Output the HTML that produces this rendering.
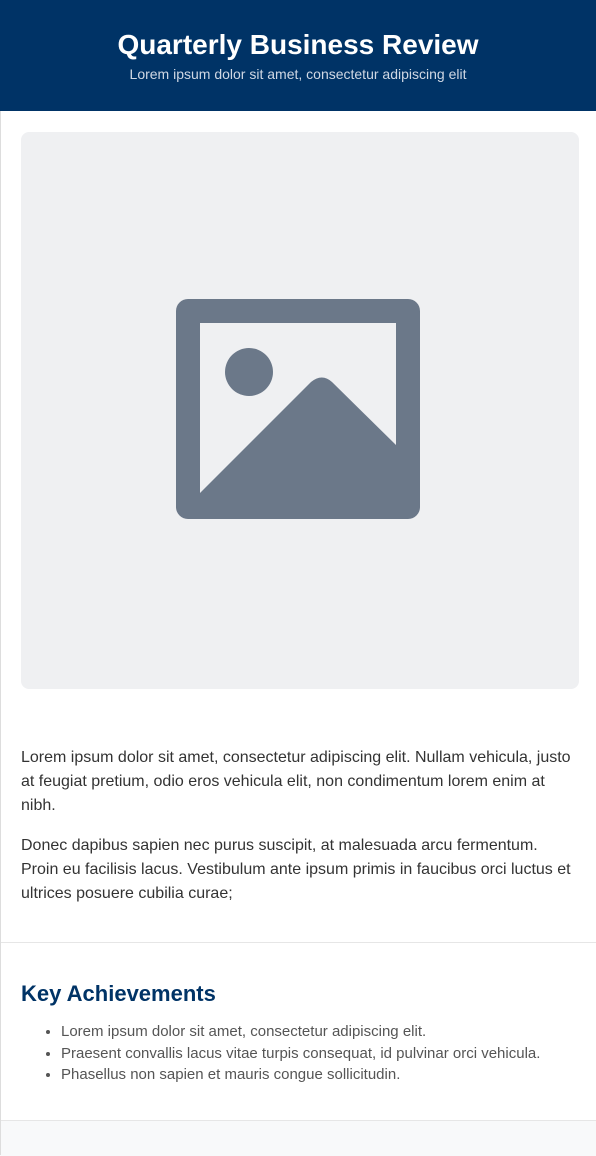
<!DOCTYPE html>
<html><head><style>
body{margin:0;width:596px;height:1155px;overflow:hidden;font-family:"Liberation Sans",Arial,sans-serif;background:#fff;}
.hdr{height:111px;background:#003366;text-align:center;color:#fff;}
.hdr h1{margin:0;padding-top:28px;font-size:28px;line-height:34px;font-weight:bold;}
.hdr p{margin:4px 0 0;font-size:14px;color:#d0d8e4;}
.img{position:absolute;left:21px;top:132px;width:558px;height:557px;background:#eff0f2;border-radius:8px;}
.txt{position:absolute;left:21px;top:746px;width:556px;font-size:16px;line-height:24px;color:#333;}
.txt p{margin:0 0 16px;}
.hr1{position:absolute;left:0;top:942px;width:596px;height:1px;background:#e6e6e6;}
h2{position:absolute;left:21px;top:980px;margin:0;font-size:22px;color:#003366;line-height:28px;}
ul{position:absolute;left:21px;top:1021px;margin:0;padding-left:40px;font-size:15px;line-height:21.5px;color:#555;}
.foot{position:absolute;left:0;top:1120px;width:596px;height:35px;background:#f8f9fa;border-top:1px solid #e6e6e6;}
.lb{position:absolute;left:0;top:111px;width:1px;height:1044px;background:#ddd;z-index:2;}
</style></head><body>
<div class="hdr"><h1>Quarterly Business Review</h1><p>Lorem ipsum dolor sit amet, consectetur adipiscing elit</p></div>
<div class="lb"></div>
<div class="img">
<svg style="position:absolute;left:155px;top:167px" width="244" height="220" viewBox="0 0 244 220">
<path fill="#6b7889" fill-rule="evenodd" d="M12 0H232A12 12 0 0 1 244 12V208A12 12 0 0 1 232 220H12A12 12 0 0 1 0 208V12A12 12 0 0 1 12 0ZM24 24V194L135 83Q146 74 156 83L220 146V24Z"/>
<circle cx="73" cy="73" r="24" fill="#6b7889"/>
</svg></div>
<div class="txt"><p>Lorem ipsum dolor sit amet, consectetur adipiscing elit. Nullam vehicula, justo at feugiat pretium, odio eros vehicula elit, non condimentum lorem enim at nibh.</p><p>Donec dapibus sapien nec purus suscipit, at malesuada arcu fermentum. Proin eu facilisis lacus. Vestibulum ante ipsum primis in faucibus orci luctus et ultrices posuere cubilia curae;</p></div>
<div class="hr1"></div>
<h2>Key Achievements</h2>
<ul><li>Lorem ipsum dolor sit amet, consectetur adipiscing elit.</li><li>Praesent convallis lacus vitae turpis consequat, id pulvinar orci vehicula.</li><li>Phasellus non sapien et mauris congue sollicitudin.</li></ul>
<div class="foot"></div>
</body></html>
